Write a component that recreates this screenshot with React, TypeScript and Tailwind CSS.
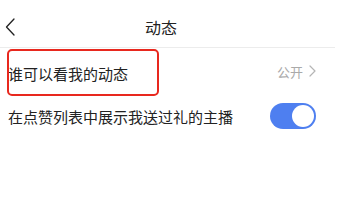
export default function App() {
  return (
    <div
      className="w-[340px] h-[224px] bg-white overflow-hidden text-[#222]"
      style={{ fontFamily: '"Noto Sans CJK SC", "Noto Sans", sans-serif' }}
    >
      {/* Header */}
      <div className="relative h-[48px] flex items-center justify-center border-b border-[#ececec] mr-[5px] pr-[13px]">
        <button className="absolute left-[4px] top-[17px] w-[12px] h-[20px] flex items-center justify-center">
          <svg width="10" height="18" viewBox="0 0 10 18" fill="none">
            <path d="M9 1L1.5 9L9 17" stroke="#222" strokeWidth="1.3" strokeLinecap="round" strokeLinejoin="round" />
          </svg>
        </button>
        <h1 className="text-[16px] leading-none font-normal mt-[7px]">动态</h1>
      </div>

      {/* Who can see */}
      <div className="relative h-[48px] flex items-center justify-between pl-[8px] pr-[24px]">
        <span className="text-[15px] leading-none mt-[2px]">谁可以看我的动态</span>
        <span className="flex items-center gap-[6px] text-[13px] leading-none text-[#aaa] mt-[-2px]">
          公开
          <svg width="7" height="12" viewBox="0 0 7 12" fill="none">
            <path d="M1 1L6 6L1 11" stroke="#b5b5b5" strokeWidth="1.2" strokeLinecap="round" strokeLinejoin="round" />
          </svg>
        </span>
        <div className="absolute left-[7px] top-[1px] w-[152px] h-[47px] border-2 border-[#e8281e] rounded-[5px]" />
      </div>

      {/* Gift list toggle */}
      <div className="h-[40px] flex items-center justify-between pl-[8px] pr-[24px]">
        <span className="text-[15px] leading-none">在点赞列表中展示我送过礼的主播</span>
        <div className="w-[46px] h-[26px] rounded-full bg-[#4e7ff0] flex items-center justify-end px-[2px]">
          <div className="w-[22px] h-[22px] rounded-full bg-white" />
        </div>
      </div>
    </div>
  );
}
